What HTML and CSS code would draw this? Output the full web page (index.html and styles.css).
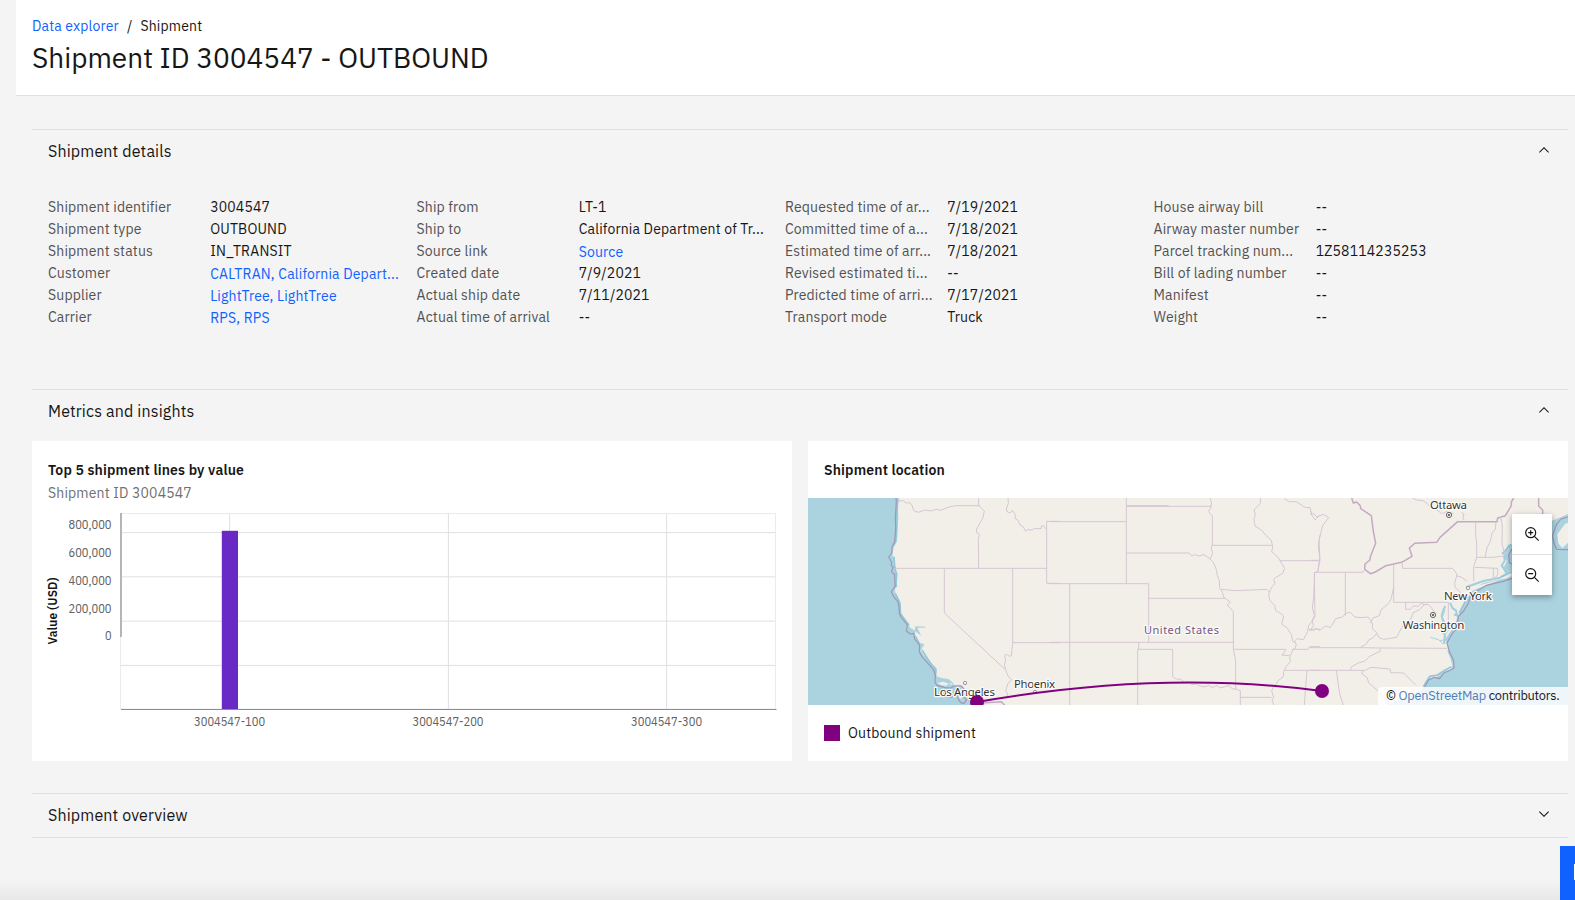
FILE: index.html
```html
<!DOCTYPE html>
<html lang="en">
<head>
<meta charset="utf-8">
<title>Shipment ID 3004547 - OUTBOUND</title>
<link rel="stylesheet" href="styles.css">
</head>
<body>
<div class="page">
  <header class="page-header">
    <nav class="breadcrumb"><a href="#">Data explorer</a><span class="slash">/</span><span class="current">Shipment</span></nav>
    <h1>Shipment ID 3004547 - OUTBOUND</h1>
  </header>
  <main>
    <section class="panel details">
      <div class="panel-heading"><h2>Shipment details</h2>
        <svg class="chevron" viewBox="0 0 16 16"><path d="M8 5l5 5-.7.7L8 6.4l-4.3 4.3L3 10z"/></svg></div>
      <div class="fields">
        <dl>
          <dt>Shipment identifier</dt><dd>3004547</dd>
          <dt>Shipment type</dt><dd>OUTBOUND</dd>
          <dt>Shipment status</dt><dd>IN_TRANSIT</dd>
          <dt>Customer</dt><dd><a href="#">CALTRAN, California Depart...</a></dd>
          <dt>Supplier</dt><dd><a href="#">LightTree, LightTree</a></dd>
          <dt>Carrier</dt><dd><a href="#">RPS, RPS</a></dd>
        </dl>
        <dl>
          <dt>Ship from</dt><dd>LT-1</dd>
          <dt>Ship to</dt><dd>California Department of Tr...</dd>
          <dt>Source link</dt><dd><a href="#">Source</a></dd>
          <dt>Created date</dt><dd>7/9/2021</dd>
          <dt>Actual ship date</dt><dd>7/11/2021</dd>
          <dt>Actual time of arrival</dt><dd>--</dd>
        </dl>
        <dl>
          <dt>Requested time of ar...</dt><dd>7/19/2021</dd>
          <dt>Committed time of a...</dt><dd>7/18/2021</dd>
          <dt>Estimated time of arr...</dt><dd>7/18/2021</dd>
          <dt>Revised estimated ti...</dt><dd>--</dd>
          <dt>Predicted time of arri...</dt><dd>7/17/2021</dd>
          <dt>Transport mode</dt><dd>Truck</dd>
        </dl>
        <dl>
          <dt>House airway bill</dt><dd>--</dd>
          <dt>Airway master number</dt><dd>--</dd>
          <dt>Parcel tracking num...</dt><dd>1Z58114235253</dd>
          <dt>Bill of lading number</dt><dd>--</dd>
          <dt>Manifest</dt><dd>--</dd>
          <dt>Weight</dt><dd>--</dd>
        </dl>
      </div>
    </section>

    <section class="panel metrics">
      <div class="panel-heading"><h2>Metrics and insights</h2>
        <svg class="chevron" viewBox="0 0 16 16"><path d="M8 5l5 5-.7.7L8 6.4l-4.3 4.3L3 10z"/></svg></div>
      <div class="cards">
        <article class="card">
          <h3>Top 5 shipment lines by value</h3>
          <p class="subtitle">Shipment ID 3004547</p>
          <svg class="chart" viewBox="32 507 760 254">
            <g class="grid">
              <rect x="120.5" y="513.5" width="655" height="195.5"/>
              <path d="M121 532.6H775M121 576.8H775M121 621.1H775M121 665.4H775M229.6 514V709M448.4 514V709M666.6 514V709"/>
            </g>
            <path class="y-axis" d="M121 513V637"/>
            <rect class="bar" x="221.8" y="530.8" width="16.2" height="178.6"/>
            <path class="x-axis" d="M121 709.5H776.5"/>
            <g class="y-labels">
              <text x="111.5" y="529" textLength="43" lengthAdjust="spacingAndGlyphs">800,000</text>
              <text x="111.5" y="557" textLength="43" lengthAdjust="spacingAndGlyphs">600,000</text>
              <text x="111.5" y="585" textLength="43" lengthAdjust="spacingAndGlyphs">400,000</text>
              <text x="111.5" y="613" textLength="43" lengthAdjust="spacingAndGlyphs">200,000</text>
              <text x="111.5" y="640" textLength="6.6" lengthAdjust="spacingAndGlyphs">0</text>
            </g>
            <g class="x-labels">
              <text x="229.6" y="726" textLength="71" lengthAdjust="spacingAndGlyphs">3004547-100</text>
              <text x="448" y="726" textLength="71" lengthAdjust="spacingAndGlyphs">3004547-200</text>
              <text x="666.6" y="726" textLength="71" lengthAdjust="spacingAndGlyphs">3004547-300</text>
            </g>
            <text class="axis-title" transform="translate(57.3 611) rotate(-90)" textLength="67">Value (USD)</text>
          </svg>
        </article>

        <article class="card">
          <h3 class="map-title">Shipment location</h3>
          <div class="map">
            <svg viewBox="808 498 760 207">
              <rect class="land" x="808" y="498" width="760" height="207"/>
              <g transform="translate(800 430) scale(.33333)">
                <path class="sea" d="M24 204H296L293 225 295 260 292 310 291 335 282 350 277 375 283 388 280 400 289 413 286 421 293 430 288 445 292 467 285 476 286 490 299 512 303 525 301 545 308 560 327 582 329 592 347 603 344 618 355 636 369 642 366 656 362 662 371 675 391 700 406 710 411 718 406 738 425 744 445 747 457 756 463 766 480 764 489 775 502 786 510 805 525 825H24Z"/>
                <path class="shore" d="M294 206L290 250 289 320 281 345 M282 380L284 412 290 435 287 472M286 490L299 517 302 552 327 586M348 604L349 590M345 617L358 640M366 660L385 690 407 720 407 740"/>
                <path class="sea" d="M349 589L376 590 376 593 352 593 364 618 349 606ZM358 641L373 642 369 652Z"/>
                <path class="isle" d="M412 759L430 755 446 761 439 767 424 765ZM448 758L458 762 452 766ZM475 794L485 804 482 807 474 799Z"/>
                <path class="coast" d="M288 204L289 214 286 265 287 295 284 335 276 352 275 370 266 381 275 397 274 406 279 411 275 425 284 435 285 470 274 485 281 500 293 514 297 528 298 550 303 561 322 585 319 603 331 612 341 610 344 627 359 646 358 665 366 680 392 709 401 720 406 736 405 757 411 766 434 773 451 774 463 768 484 768 499 785 508 811M445 790L437 797 447 802 461 799 472 793M473 792L474 806 482 818 492 820 500 809 490 801 486 791Z"/>
                <path class="state" d="M297 213L310 212 318 219 330 218 337 228 341 242 355 247 374 240 392 243 409 238 421 241 447 231 468 227H540M536 204V226L553 243 549 263 530 297 529 307 539 313 535 325 536 415M284 415H740M433 415V549L616 719M638 415V638H780M740 460V274H780M740 460H780M638 638L634 677 627 679 621 673 614 676 617 692 613 703 617 719 624 738 635 750 624 760 617 781 624 795 613 804M624 204L625 220 619 237 622 246 631 249 637 241 646 253 645 265 655 272 660 285 670 291 677 304 683 298 696 301 702 296 724 296 724 288 730 287 740 299"/>
                <path class="border" d="M513 821L604 815 613 825H615"/>
              </g>
              <g transform="translate(1050 490) scale(.33333)">
                <path class="state" d="M0 95H229V24M229 47H356M229 49H484M229 95V281M0 281H296V325H525M229 189H417L425 198 434 194 446 198 462 194 471 200 485 211M296 325V457M59 281V645M0 457H550M266 457V478H263V645M263 478H368V560L380 568 390 567 403 577 415 576 426 584 440 581 450 588 465 591 475 586 487 593 501 586 510 594 524 590 536 587 547 596 559 598 571 602V645M571 622H665M480 24L484 36 483 52 475 65 487 78V166L483 171 488 190 480 207 490 217 500 241 501 254 508 272 509 293 517 307 522 323 541 336 532 345 550 365V478L557 512V598M485 166H665M514 298L558 302 651 298 660 308M631 24V40L612 60 616 72 612 88 615 108 637 122 646 135 664 151 668 172 665 185 684 202 704 235 698 250 677 263 671 268 675 280 667 289 656 311 659 331 674 346 677 362 692 370 701 378 695 403 710 412 724 433 728 454 739 460M550 478H708L696 496H719M690 212H810M703 26L718 35 739 35 757 47 767 53 780 52 786 76 795 90 809 76M810 135L805 170 809 203 804 245 794 248 791 320 787 354 793 376 787 393 776 406 773 425 760 449 741 446 733 455 739 463 735 476 728 478 724 491 719 500 721 515 709 529 701 545 700 560 683 573 678 583 670 591 665 604 671 621 666 632 672 645M728 478H774L778 470H810M704 541H810M771 541L763 645M776 418L792 421 799 416 810 421"/>
              </g>
              <g transform="translate(1310 480) scale(.33333)">
                <path class="sea" d="M774 102L740 117 725 122V190L606 190 598 203 586 223 579 233 591 242 586 253 580 264 583 274 593 278 602 271 605 288 589 295 566 299 543 304 520 309 500 320 480 333 478 345 468 362 455 390 444 405 432 440 418 459 406 477 414 494 413 516 422 537 427 556 424 568 400 575 380 590 357 594 345 606 341 622 320 639 292 652 265 660 234 675H774Z"/>
                <path class="bay" d="M420 368L428 385 438 391 441 407 432 403M406 378L400 390 395 407 401 431 394 451 405 465 402 489M468 323L478 318 520 303 570 293 590 282 583 268 575 257 584 242 583 222 598 194"/>
                <path class="creek" d="M361 472L386 479 399 492 409 488 404 466 421 444 411 439M405 428L397 411 406 390M388 482L402 480M498 328L529 318 565 304"/>
                <path class="isle" d="M482 325L508 316 542 307 568 300 530 315 501 326 484 334ZM742 163L765 132 774 128V188L757 204 745 190Z"/>
                <path class="shore" d="M340 620L359 589 382 585 402 572 424 560M473 350L448 399M574 290L605 275M576 222L603 193"/>
                <path class="coast" d="M774 111L753 117 739 134 727 168 734 196 741 208 774 209M606 207L596 225 598 248 607 252M606 295L579 304 550 311 530 316 491 339 482 345 475 370 461 393 445 410 441 445 427 460 411 489 419 517 431 542 432 564 416 573 401 579 389 596 373 592 355 601 344 621"/>
                <path class="border" d="M125 54L130 69 140 66 151 77 152 86 184 107 190 154 197 190 181 230 180 240 165 252 164 268 181 281 196 276 228 257 275 247 306 229 298 204 314 190 380 187 390 172 443 125H561L563 114 586 107 604 77 604 66 611 54M686 54V78L698 90V102"/>
                <path class="state" d="M0 103L12 101 20 111 40 103 56 113 38 137 27 181 30 241 23 275M0 241H28M0 94L6 99M13 277H159L160 272M13 277L15 411 6 422 11 437 0 451M106 277V407M251 254V367H415V425M277 247V265H428L440 281 440 287 453 291 471 303M440 288L434 310 436 323 452 337 427 366M251 320L244 355 236 370 213 390 208 407 189 414 181 430M0 451L17 446 31 449 46 438 61 443 77 416 98 411 106 400 121 397 135 411 153 413 175 411 188 432 187 446 199 457 207 473 221 478 260 472 267 458 281 433 302 418 309 399 328 389 344 373 356 374 367 387 376 400M287 367V388L301 388 310 378 325 379 333 370 348 375M199 461L190 473 176 480 170 491 150 503M0 503H150L211 504 411 505M0 571H160L155 581 172 593 176 609 202 631 218 651 233 660 237 675M161 573L183 562 240 567 242 578 281 579 318 616M211 504L210 514 179 529 165 543 145 549 125 560 121 570M79 571L89 642 100 675M497 125V165L500 190V232L491 260V304M500 232H550L581 228M494 262L563 265V284L549 300M550 263V300M558 125L556 148 546 159 541 184 531 204 525 232M571 111L577 135 576 192 585 223M307 54L320 60 339 62 355 73 360 81 377 86 395 101 409 95 431 101M455 98L462 102 459 114 462 120"/>
              </g>
              <g class="place">
                <circle class="small" cx="965" cy="683" r="1.7"/><circle class="small" cx="1035" cy="692" r="1.7"/><circle class="small" cx="1468" cy="588" r="1.7"/>
                <circle cx="1449" cy="515" r="2.6"/><circle class="dot" cx="1449" cy="515" r="1"/>
                <circle cx="1433" cy="615" r="2.6"/><circle class="dot" cx="1433" cy="615" r="1"/>
                <text x="964.5" y="696" textLength="61">Los Angeles</text>
                <text x="1034.5" y="688" textLength="41">Phoenix</text>
                <text x="1448.5" y="509" textLength="37">Ottawa</text>
                <text x="1468" y="600" textLength="48">New York</text>
                <text x="1433.5" y="629" textLength="61.5">Washington</text>
                <text class="country" x="1181.5" y="634" textLength="75">United States</text>
              </g>
              <path class="route" d="M977 702Q1162 669.5 1322 691"/>
              <circle class="stop" cx="977" cy="702" r="7"/><circle class="stop" cx="1322" cy="691" r="7"/>
            </svg>
            <div class="map-controls">
              <button aria-label="Zoom in"><svg viewBox="0 0 16 16"><circle cx="6.7" cy="6.7" r="5"/><path d="M10.4 10.4L14.7 14.7M4.2 6.7h5M6.7 4.2v5"/></svg></button>
              <button aria-label="Zoom out"><svg viewBox="0 0 16 16"><circle cx="6.7" cy="6.7" r="5"/><path d="M10.4 10.4L14.7 14.7M4.2 6.7h5"/></svg></button>
            </div>
            <div class="attribution">© <a href="#">OpenStreetMap</a> contributors.</div>
          </div>
          <div class="legend"><span class="swatch"></span><span>Outbound shipment</span></div>
        </article>
      </div>
    </section>

    <section class="panel overview">
      <div class="panel-heading"><h2>Shipment overview</h2>
        <svg class="chevron" viewBox="0 0 16 16"><path d="M8 11L3 6l.7-.7L8 9.6l4.3-4.3.7.7z"/></svg></div>
    </section>
  </main>
</div>
<div class="bottom-fade"></div>
<button class="chat" aria-label="Open chat"><span></span></button>
</body>
</html>
```
FILE: styles.css
```css
* { box-sizing: border-box; }
body {
  margin: 0;
  height: 900px;
  overflow: hidden;
  background: #f4f4f4;
  color: #161616;
  font-family: "IBM Plex Sans", Roboto, "Liberation Sans", sans-serif;
  font-size: 14px;
  line-height: 18px;
  letter-spacing: 0.16px;
  white-space: nowrap;
}
h1, h2, h3, p, dl, dd { margin: 0; }
a { color: #0f62fe; text-decoration: none; }
button { border: 0; padding: 0; }
.page { margin-left: 16px; }
.page-header {
  height: 96px;
  padding: 17px 16px 0;
  background: #fff;
  border-bottom: 1px solid #e0e0e0;
}
.breadcrumb { display: flex; }
.slash { margin: 0 8px; }
h1 { margin-top: 5px; font-size: 28px; line-height: 36px; font-weight: 400; letter-spacing: 0; }
main { padding: 33px 7px 0 16px; }
.panel { border-top: 1px solid #e0e0e0; }
.details { height: 260px; }
.metrics { height: 404px; }
.overview { height: 45px; border-bottom: 1px solid #e0e0e0; }
.panel-heading {
  display: flex;
  justify-content: space-between;
  padding: 10px 16px 0;
  height: 51px;
}
h2 { font-size: 16px; line-height: 22px; font-weight: 400; letter-spacing: 0.15px; }
.chevron { width: 16px; height: 16px; margin-top: 2px; fill: #161616; }
.fields {
  display: grid;
  grid-template-columns: repeat(4, 368.5px);
  padding: 16px 0 0 16px;
}
dl { display: grid; grid-template-columns: 162.2px 1fr; grid-auto-rows: 22px; line-height: 20px; }
dt { color: #525252; }
dd a { position: relative; top: 1px; }
.cards { display: grid; grid-template-columns: 1fr 1fr; gap: 16px; }
.card { height: 320px; background: #fff; overflow: hidden; }
h3 { margin: 20px 16px 0; font-size: 14px; line-height: 18px; font-weight: 600; }
.subtitle { margin: 5px 16px 0; color: #6f6f6f; line-height: 18px; }
.chart { display: block; width: 760px; height: 254px; margin-top: 5px; font-size: 12px; letter-spacing: 0; }
.grid { fill: none; stroke: #e0e0e0; }
.grid rect { stroke: #ebebeb; }
.y-axis { stroke: #b5b5b5; stroke-width: 2; }
.x-axis { stroke: #8d8d8d; }
.bar { fill: #6929c4; }
.y-labels, .x-labels { font-family: "IBM Plex Sans Condensed", "IBM Plex Sans", sans-serif; font-size: 13px; fill: #616161; }
.y-labels { text-anchor: end; }
.x-labels { text-anchor: middle; }
.axis-title { text-anchor: middle; font-weight: 600; fill: #161616; }
.map-title { margin-bottom: 19px; }
.map { position: relative; height: 207px; }
.map > svg { display: block; width: 760px; height: 207px; }
.land, .isle { fill: #f2efe9; }
.sea { fill: #aad3df; }
.shore { fill: none; stroke: #91c8dc; stroke-width: 5; stroke-linejoin: round; }
.bay { fill: none; stroke: #a0cfde; stroke-width: 6; stroke-linejoin: round; }
.creek { fill: none; stroke: #a9d3df; stroke-width: 3; stroke-linejoin: round; }
.coast { fill: none; stroke: #a294b5; stroke-width: 3.5; stroke-linejoin: round; }
.state { fill: none; stroke: #d5c6d3; stroke-width: 3; stroke-linejoin: round; }
.border { fill: none; stroke: #c3aac2; stroke-width: 4.5; stroke-linejoin: round; }
.place circle { fill: #f2efe9; stroke: #555; stroke-width: 0.9; }
.place .small { stroke: #888; stroke-width: 0.8; }
.place .dot { fill: #444; stroke: none; }
.place text {
  font: 11.5px "Noto Sans", sans-serif;
  letter-spacing: 0;
  text-anchor: middle;
  fill: #333;
  stroke: #fbfaf8;
  stroke-width: 2.5px;
  stroke-linejoin: round;
  paint-order: stroke;
}
.place .country { fill: #785581; font-size: 11px; }
.route { fill: none; stroke: #800080; stroke-width: 2; }
.stop { fill: #800080; }
.map-controls {
  position: absolute;
  top: 16px;
  right: 16px;
  width: 40px;
  background: #fff;
  box-shadow: 0 2px 6px rgba(0, 0, 0, 0.35);
}
.map-controls button {
  display: flex;
  align-items: center;
  justify-content: center;
  width: 40px;
  height: 40px;
  background: #fff;
}
.map-controls button + button { height: 41px; border-top: 1px solid #e0e0e0; }
.map-controls svg { width: 16px; height: 16px; margin: 0 1px 1px 0; fill: none; stroke: #161616; stroke-width: 1.2; }
.attribution {
  position: absolute;
  right: 0;
  bottom: 0;
  width: 190px;
  height: 18px;
  padding: 0 8px;
  background: rgba(255, 255, 255, 0.8);
  border-radius: 4px 0 0;
  font-size: 12.8px;
  line-height: 18px;
  letter-spacing: -0.24px;
}
.attribution a { color: #4f7dba; }
.legend { display: flex; align-items: center; gap: 8px; margin: 19px 16px 0; }
.swatch { width: 16px; height: 16px; background: #800080; }
.bottom-fade {
  position: absolute;
  left: 0;
  right: 0;
  bottom: 0;
  height: 20px;
  background: linear-gradient(to bottom, rgba(0, 0, 0, 0), rgba(0, 0, 0, 0.05));
}
.chat { position: absolute; right: 0; bottom: 0; width: 15px; height: 54px; background: #0f62fe; }
.chat span { position: absolute; right: 0; top: 18px; width: 1px; height: 16px; background: #fff; }
```
